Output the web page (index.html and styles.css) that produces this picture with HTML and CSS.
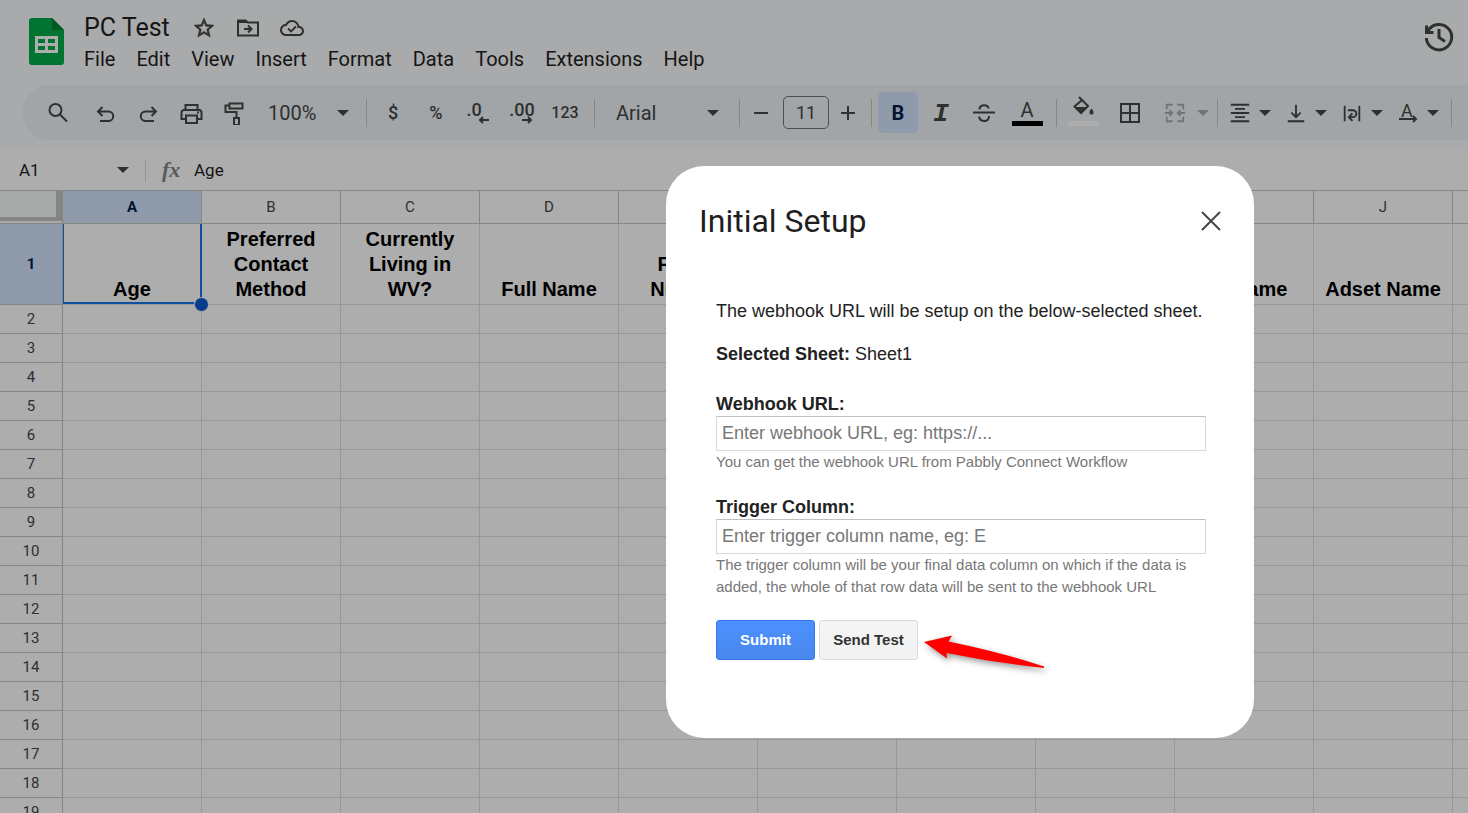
FILE: index.html
```html
<!DOCTYPE html>
<html lang="en">
<head>
  <meta charset="UTF-8" />
  <meta name="viewport" content="width=device-width, initial-scale=1.0"/>
  <title>PC Test</title>
  <link rel="stylesheet" href="styles.css">
</head>
<body>

  <!-- ======= HEADER ======= -->
  <header>
    <svg class="logo" viewBox="0 0 35 47">
      <path d="M3 0h20l12 12v32a3 3 0 0 1-3 3H3a3 3 0 0 1-3-3V3a3 3 0 0 1 3-3z" fill="#00ac47"/>
      <path d="M23 0l12 12H23z" fill="#00832d"/>
      <path d="M6 18h23v17H6zM9 21v4h7v-4zM19 21v4h7v-4zM9 28v4h7v-4zM19 28v4h7v-4z" fill="#fff" fill-rule="evenodd"/>
    </svg>
    <div class="doc">
      <div class="title-row">
        <h1>PC Test</h1>
        <button class="icon-btn" aria-label="Star">
          <svg viewBox="0 0 24 24" class="solid"><path d="M22 9.24l-7.19-.62L12 2 9.19 8.63 2 9.24l5.46 4.73L5.82 21 12 17.27 18.18 21l-1.63-7.03L22 9.24zM12 15.4l-3.76 2.27 1-4.28-3.32-2.88 4.38-.38L12 6.1l1.71 4.04 4.38.38-3.32 2.88 1 4.28L12 15.4z" stroke="#444746" stroke-width="0.600"/></svg>
        </button>
        <button class="icon-btn" aria-label="Move">
          <svg viewBox="0 0 24 24"><path d="M2 7v12.500h20V6.500H12L9.500 4.500H2z"/><path d="M2 4h7l2 3H2z" class="solid"/><path d="M8 13h7M12 9.500l3.500 3.500-3.500 3.500"/></svg>
        </button>
        <button class="icon-btn" aria-label="Saved to Drive">
          <svg viewBox="0 0 24 24" class="solid"><path d="M19.35 10.040A7.49 7.49 0 0 0 12 4C9.11 4 6.6 5.64 5.35 8.040A5.994 5.994 0 0 0 0 14c0 3.31 2.69 6 6 6h13c2.76 0 5-2.24 5-5 0-2.64-2.050-4.78-4.65-4.96zM19 18H6c-2.21 0-4-1.79-4-4s1.79-4 4-4h.71C7.37 7.69 9.48 6 12 6c3.040 0 5.5 2.46 5.5 5.5v.5H19c1.66 0 3 1.34 3 3s-1.34 3-3 3z"/><path d="M8 12.500l3 3 5-5" fill="none" stroke="#444746" stroke-width="1.800"/></svg>
        </button>
      </div>
      <nav>
        <a href="#">File</a>
        <a href="#">Edit</a>
        <a href="#">View</a>
        <a href="#">Insert</a>
        <a href="#">Format</a>
        <a href="#">Data</a>
        <a href="#">Tools</a>
        <a href="#">Extensions</a>
        <a href="#">Help</a>
      </nav>
    </div>
    <button class="icon-btn history" aria-label="Version history">
      <svg viewBox="0 0 32 32"><path d="M3.300 17A12.700 12.700 0 1 0 6 8.300L4 11"/><path d="M3.500 4.500V11.500H10.500"/><path d="M16 8v8.500l6 4"/></svg>
    </button>
  </header>

  <!-- ======= TOOLBAR ======= -->
  <div class="toolbar">
    <button class="tool search" aria-label="Search"><svg viewBox="0 0 24 24"><circle cx="9.500" cy="9" r="6"/><path d="M14 13.500l7 7"/></svg></button>
    <button class="tool" aria-label="Undo"><svg viewBox="0 0 24 24"><path d="M5 10.500h10.500a4.500 4.500 0 0 1 0 9.500H7M9.500 6L5 10.500 9.500 15"/></svg></button>
    <button class="tool" aria-label="Redo"><svg viewBox="0 0 24 24"><path d="M20 10.500H9.500a4.500 4.500 0 0 0 0 9.500H18M15.500 6l4.500 4.500-4.500 4.500"/></svg></button>
    <button class="tool" aria-label="Print"><svg viewBox="0 0 24 24"><path d="M6.500 9V4h12v5M6.500 18h-4v-6.500A2.500 2.500 0 0 1 5 9h15a2.500 2.500 0 0 1 2.500 2.500V18h-4M7 14.500h11V22H7z"/><path d="M18 11.500h2"/></svg></button>
    <button class="tool" aria-label="Paint format"><svg viewBox="0 0 24 24"><path d="M7.500 2.500h13v5h-13zM7.500 4.500h-4v6.500h11v6M12 17h5v7h-5z"/></svg></button>
    <button class="drop zoom">100% <i class="caret"></i></button>
    <span class="sep"></span>
    <button class="tool text">$</button>
    <button class="tool text">%</button>
    <button class="tool text dec less" aria-label="Decrease decimal places">.0<svg viewBox="0 0 12 8"><path d="M11 4H2M5 1L2 4l3 3"/></svg></button>
    <button class="tool text dec" aria-label="Increase decimal places">.00<svg viewBox="0 0 12 8"><path d="M1 4h9M7 1l3 3-3 3"/></svg></button>
    <button class="tool text num">123</button>
    <span class="sep"></span>
    <button class="drop font">Arial <i class="caret"></i></button>
    <span class="sep"></span>
    <button class="step" aria-label="Decrease font size"><svg viewBox="0 0 24 24"><path d="M5 12h14"/></svg></button>
    <input class="size" type="text" value="11" aria-label="Font size">
    <button class="step" aria-label="Increase font size"><svg viewBox="0 0 24 24"><path d="M5 12h14M12 5v14"/></svg></button>
    <span class="sep"></span>
    <button class="tool bold active">B</button>
    <button class="tool italic">I</button>
    <button class="tool" aria-label="Strikethrough"><svg viewBox="0 0 24 24"><path d="M1 11.500h22M7.500 8.500C7.500 3 16 3 16.500 7.500M7 15.500c1 6 10.500 6 10-.5"/></svg></button>
    <button class="tool color">A</button>
    <span class="sep"></span>
    <button class="tool wide fill" aria-label="Fill color"><svg viewBox="0 0 24 24"><path d="M6 1l9 9-7 7-6.500-6.500L9 4" stroke-width="2"/><path d="M2 11h12.500L8 17.500z" class="solid"/><path d="M18.500 12.500c3 3.500 2.500 6 0 6s-3-2.500 0-6z" class="solid"/></svg></button>
    <button class="tool wide" aria-label="Borders"><svg viewBox="0 0 24 24"><path d="M2 3h18v18H2zM11 3v18M2 12h18"/></svg></button>
    <button class="drop merge" aria-label="Merge cells"><svg viewBox="0 0 24 24"><path d="M9.500 3H3v5M14.500 3H21v5M3 16v5h6.500M21 16v5h-6.500M1 12h8M6 9l3 3-3 3M23 12h-8M18 9l-3 3 3 3"/></svg><i class="caret"></i></button>
    <span class="sep"></span>
    <div class="tool-group">
      <button class="drop" aria-label="Horizontal align"><svg viewBox="0 0 24 24"><path d="M2 3h20M6.500 7.500h11M2 12h20M6.500 16.500h11M2 21h20"/></svg><i class="caret"></i></button>
      <button class="drop" aria-label="Vertical align"><svg viewBox="0 0 24 24"><path d="M12 3v13M7 11.500l5 5 5-5M3 21h18"/></svg><i class="caret"></i></button>
      <button class="drop" aria-label="Text wrapping"><svg viewBox="0 0 24 24"><path d="M4 4v17M20 4v17M7.500 9H13a3.700 3.700 0 0 1 0 7.500H9M12.500 12.500l-4 4 4 4"/></svg><i class="caret"></i></button>
      <button class="drop rotate" aria-label="Text rotation"><span>A</span><svg viewBox="0 0 20 8"><path d="M1 4h17M15 1l3 3-3 3"/></svg><i class="caret"></i></button>
    </div>
    <span class="sep"></span>
  </div>

  <!-- ======= FORMULA BAR ======= -->
  <div class="formula-bar">
    <input class="name-box" type="text" value="A1" aria-label="Name box">
    <i class="caret"></i>
    <span class="line"></span>
    <span class="fx">fx</span>
    <input class="formula" type="text" value="Age" aria-label="Formula">
  </div>

  <!-- ======= SHEET ======= -->
  <div class="sheet">
    <table>
      <thead>
        <tr id="letters"><th class="corner"></th></tr>
      </thead>
      <tbody id="rows"></tbody>
    </table>
  </div>

  <!-- ======= DIALOG ======= -->
  <div class="overlay">
    <div class="modal" role="dialog" aria-labelledby="modalTitle">
      <div class="modal-head">
        <h2 id="modalTitle">Initial Setup</h2>
        <button class="close" id="closeBtn" aria-label="Close"><svg viewBox="0 0 20 20"><path d="M1 1l18 18M19 1L1 19"/></svg></button>
      </div>
      <form class="modal-body">
        <p>The webhook URL will be setup on the below-selected sheet.</p>
        <p><b>Selected Sheet:</b> Sheet1</p>
        <div class="field">
          <label for="webhook">Webhook URL:</label>
          <input type="text" id="webhook" placeholder="Enter webhook URL, eg: https://...">
          <small>You can get the webhook URL from Pabbly Connect Workflow</small>
        </div>
        <div class="field">
          <label for="trigger">Trigger Column:</label>
          <input type="text" id="trigger" placeholder="Enter trigger column name, eg: E">
          <small>The trigger column will be your final data column on which if the data is added, the whole of that row data will be sent to the webhook URL</small>
        </div>
        <div class="actions">
          <button type="button" class="btn submit">Submit</button>
          <button type="button" class="btn">Send Test</button>
          <svg class="arrow" viewBox="0 0 130 50"><path d="M4 17L32 10.500 28.500 16.500Q80 27 124 41.500V43Q75 38 26.500 28L27 33.500z"/></svg>
        </div>
      </form>
    </div>
  </div>

  <script>
    const heads = ["Age", "Preferred Contact Method", "Currently Living in WV?", "Full Name", "Phone Number", "Email", "City", "State", "Ad Name", "Adset Name", ""];

    const letters = document.getElementById('letters');
    const rows = document.getElementById('rows');

    heads.forEach((h, i) => {
      const th = document.createElement('th');
      th.textContent = String.fromCharCode(65 + i);
      if (i === 0) th.className = 'selected';
      letters.appendChild(th);
    });

    for (let r = 1; r <= 19; r++) {
      const tr = document.createElement('tr');
      tr.innerHTML = `<th>${r}</th>` + heads.map(h => `<td>${r === 1 ? h : ''}</td>`).join('');
      rows.appendChild(tr);
    }

    rows.rows[0].className = 'first';
    rows.rows[0].cells[0].className = 'selected';
    rows.rows[0].cells[1].className = 'current';

    document.getElementById('closeBtn').addEventListener('click', () => {
      document.querySelector('.overlay').style.display = 'none';
    });
  </script>
</body>
</html>
```
FILE: styles.css
```css
* {
  box-sizing: border-box;
}

body {
  font-family: Roboto, sans-serif;
  margin: 0;
  height: 100vh;
  overflow: hidden;
  background: #f9fbfd;
  color: #1f1f1f;
  display: flex;
  flex-direction: column;
}

button {
  font-family: inherit;
  color: #444746;
  background: none;
  border: none;
  padding: 0;
  cursor: pointer;
}

svg {
  display: block;
  flex: none;
  fill: none;
  stroke: #444746;
  stroke-width: 2;
}

.solid {
  fill: #444746;
  stroke: none;
}

.caret {
  border: 6px solid transparent;
  border-top-color: #444746;
  border-bottom: none;
  flex: none;
}

/* ===== HEADER ===== */
header {
  display: flex;
  flex: none;
  height: 85px;
  padding: 12px 13px 0 29px;
}

.logo {
  width: 35px;
  height: 47px;
  margin: 6px 20px 0 0;
  stroke: none;
}

.doc {
  flex: 1;
}

.title-row {
  display: flex;
  align-items: center;
  height: 32px;
  gap: 20px;
}

h1 {
  font-size: 25px;
  font-weight: 400;
  line-height: 32px;
  margin: 0 2px 0 0;
}

.icon-btn svg {
  width: 24px;
  height: 24px;
}

nav {
  display: flex;
  gap: 21px;
}

nav a {
  font-size: 20px;
  line-height: 30px;
  color: #1f1f1f;
  text-decoration: none;
}

.history {
  align-self: flex-start;
  margin-top: 9px;
}

.history svg {
  width: 32px;
  height: 32px;
  stroke-width: 3;
}

/* ===== TOOLBAR ===== */
.toolbar {
  display: flex;
  align-items: center;
  flex: none;
  height: 55px;
  margin: 0 0 10px 22px;
  padding-left: 15px;
  background: #eef3f7;
  border-radius: 28px 0 0 28px;
  overflow: hidden;
}

.tool {
  display: flex;
  align-items: center;
  justify-content: center;
  position: relative;
  flex: none;
  width: 40px;
  height: 41px;
  margin: 0 2px 0 1px;
  border-radius: 5px;
}

.tool svg,
.drop svg,
.step svg {
  width: 24px;
  height: 24px;
}

.search {
  margin-right: 6px;
}

.wide {
  width: 43px;
}

.sep {
  flex: none;
  width: 1px;
  height: 28px;
  margin: 0 5px 0 7px;
  background: #c7c7c7;
}

.drop {
  display: flex;
  align-items: center;
  justify-content: space-between;
  flex: none;
  width: 53px;
  height: 41px;
  padding: 0 5px 0 6px;
  font-size: 20px;
}

.drop svg {
  width: 22px;
}

.zoom {
  width: 103px;
  padding: 0 10px 0 12px;
}

.font {
  width: 132px;
  padding: 0 13px 0 16px;
}

.merge {
  width: 56px;
  padding: 0 1px 0 10px;
  opacity: 0.4;
}

.text {
  font-size: 18px;
  font-weight: 500;
}

.num {
  font-size: 16px;
}

.dec {
  padding-bottom: 7px;
}

.less {
  padding-right: 10px;
}

.tool.dec svg {
  position: absolute;
  right: 9px;
  bottom: 9px;
  width: 12px;
  height: 8px;
}

.step {
  flex: none;
  width: 32px;
  padding: 0 4px;
}

.size {
  flex: none;
  width: 46px;
  height: 33px;
  margin: 0 3px 0 6px;
  padding: 0;
  font: 18px Roboto, sans-serif;
  text-align: center;
  color: #444746;
  background: none;
  border: 1px solid #747775;
  border-radius: 5px;
}

.active {
  background: #d3e3fd;
}

.bold {
  font-size: 20px;
  font-weight: 700;
  color: #041e49;
}

.italic {
  padding-top: 3px;
  font: italic 700 26px "Liberation Mono", monospace;
}

.color {
  font-size: 20px;
  padding-bottom: 5px;
}

.color::after,
.fill::after {
  content: "";
  position: absolute;
  left: 5px;
  bottom: 7px;
  width: 31px;
  height: 5px;
  background: #000;
}

.fill {
  padding-bottom: 10px;
}

.fill::after {
  background: #fff;
}

.tool-group {
  display: flex;
  gap: 3px;
}

.rotate {
  position: relative;
  padding-left: 10px;
}

.rotate span {
  padding-bottom: 5px;
  font-size: 18px;
}

.drop.rotate svg {
  position: absolute;
  left: 7px;
  bottom: 10px;
  width: 20px;
  height: 8px;
}

/* ===== FORMULA BAR ===== */
.formula-bar {
  display: flex;
  align-items: center;
  flex: none;
  height: 41px;
  background: #fff;
  border-bottom: 1px solid #c4c7c5;
}

.formula-bar input {
  font: 17px Roboto, sans-serif;
  color: #1f1f1f;
  background: none;
  border: none;
  padding: 0;
}

.name-box {
  width: 98px;
  margin-left: 19px;
}

.line {
  width: 1px;
  height: 23px;
  margin: 0 16px;
  background: #dadce0;
}

.fx {
  width: 32px;
  font: italic 700 22px "Liberation Serif", serif;
  color: #80868b;
}

.formula {
  flex: 1;
}

/* ===== SHEET ===== */
.sheet {
  flex: 1;
  overflow: hidden;
  background: #fff;
}

table {
  table-layout: fixed;
  width: 1592px;
  border-collapse: separate;
  border-spacing: 0;
}

th,
td {
  width: 139px;
  height: 29px;
  padding: 0;
  border-right: 1px solid #e1e1e1;
  border-bottom: 1px solid #e1e1e1;
}

th {
  font-size: 15px;
  font-weight: 400;
  color: #444746;
  border-color: #c4c7c5;
}

thead th {
  height: 33px;
}

.corner,
tbody th {
  width: 63px;
}

.corner {
  background: #f8f9fa;
  box-shadow: inset 0 -2px #f8f9fa, inset -6px -6px #c3c3c0;
}

.selected {
  background: #d3e3fd;
  color: #041e49;
  font-weight: 700;
}

td {
  font: bold 20px/25px "Liberation Sans", sans-serif;
  color: #000;
  text-align: center;
  vertical-align: bottom;
}

.first td {
  height: 81px;
  padding: 0 12px 2px;
}

.first td:nth-child(11) {
  padding: 0 0 2px;
}

.first .current {
  position: relative;
  box-shadow: inset 1px 0 #1a73e8, inset -1px -2px #1a73e8;
  border-right-color: #1a73e8;
}

.current::after {
  content: "";
  position: absolute;
  right: -8px;
  bottom: -8px;
  width: 13px;
  height: 13px;
  background: #0b57d0;
  border: 1px solid #fff;
  border-radius: 50%;
}

/* ===== DIALOG ===== */
.overlay {
  position: fixed;
  inset: 0;
  display: flex;
  align-items: flex-start;
  justify-content: flex-end;
  padding: 166px 214px 0 0;
  background: rgba(0, 0, 0, 0.32);
}

.modal {
  width: 588px;
  background: #fff;
  border-radius: 38px;
}

.modal-head {
  display: flex;
  align-items: center;
  justify-content: space-between;
  padding: 35px 33px 0 33px;
}

h2 {
  font-size: 32px;
  font-weight: 400;
  line-height: 40px;
  margin: 0;
}

.close svg {
  width: 20px;
  height: 20px;
}

.modal-body {
  padding: 59px 48px 78px 50px;
  font: 18px/22px "Liberation Sans", sans-serif;
  color: #222;
}

p {
  margin: 0 0 21px;
}

.field {
  display: flex;
  flex-direction: column;
  margin-bottom: 22px;
}

p + .field {
  margin-top: 27px;
}

.field label {
  font-weight: bold;
  line-height: 24px;
}

.field input {
  height: 35px;
  padding: 0 5px;
  font: 18px "Liberation Sans", sans-serif;
  color: #333;
  border: 1px solid #d9d9d9;
  border-top-color: #c0c0c0;
}

.field input::placeholder {
  color: #777;
}

small {
  font-size: 15px;
  color: #777;
}

.actions {
  display: flex;
  gap: 4px;
  position: relative;
}

.btn {
  width: 99px;
  height: 40px;
  padding-bottom: 2px;
  font: bold 15px "Liberation Sans", sans-serif;
  color: #333;
  background: linear-gradient(#f5f5f5, #f1f1f1);
  border: 1px solid #dcdcdc;
  border-radius: 3px;
}

.submit {
  color: #fff;
  background: linear-gradient(#4d90fe, #4787ed);
  border-color: #3079ed;
}

.arrow {
  position: absolute;
  left: 204px;
  top: 5px;
  width: 130px;
  height: 50px;
  fill: #f00;
  stroke: none;
  overflow: visible;
  filter: drop-shadow(2px 3px 3px rgba(0, 0, 0, 0.4));
}
```
